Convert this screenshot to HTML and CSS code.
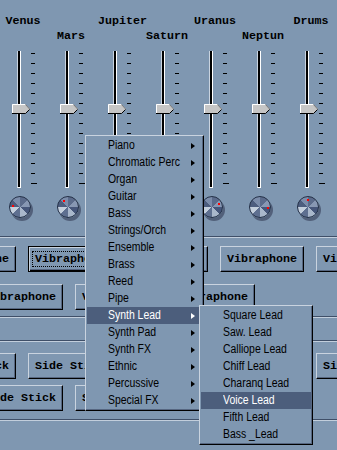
FILE: index.html
```html
<!DOCTYPE html>
<html lang="en">
<head>
    <meta charset="UTF-8">
    <meta name="viewport" content="width=device-width, initial-scale=1.0">
    <title>Mixer</title>
    <link rel="stylesheet" href="styles.css">
</head>
<body>
    <svg class="defs" width="0" height="0">
        <symbol id="thumb" viewBox="0 0 18 10">
            <polygon points="0,0 13,0 18,5 13,10 0,10" fill="#c6c6c6"/>
            <polyline points="0.5,10 0.5,0.5 13.5,0.5" fill="none" stroke="#fff"/>
            <polyline points="13.5,0.5 17.5,5" fill="none" stroke="#7a7a7a"/>
            <polyline points="0,9.5 13.5,9.5 17.5,5.5" fill="none" stroke="#000"/>
        </symbol>
    </svg>

    <div class="mixer">
        <div class="channel">
            <div class="name">Venus</div>
            <div class="fader"><div class="groove"></div><div class="ticks"></div><svg class="thumb" width="18" height="10"><use href="#thumb"/></svg></div>
            <div class="knob"><b style="left: 2px; top: 8px;"></b></div>
        </div>
        <div class="channel low">
            <div class="name">Mars</div>
            <div class="fader"><div class="groove"></div><div class="ticks"></div><svg class="thumb" width="18" height="10"><use href="#thumb"/></svg></div>
            <div class="knob"><b style="left: 5px; top: 3px;"></b></div>
        </div>
        <div class="channel">
            <div class="name">Jupiter</div>
            <div class="fader"><div class="groove"></div><div class="ticks"></div><svg class="thumb" width="18" height="10"><use href="#thumb"/></svg></div>
            <div class="knob"><b style="left: 3px; top: 5px;"></b></div>
        </div>
        <div class="channel low">
            <div class="name">Saturn</div>
            <div class="fader"><div class="groove"></div><div class="ticks"></div><svg class="thumb" width="18" height="10"><use href="#thumb"/></svg></div>
            <div class="knob"><b style="left: 15px; top: 5px;"></b></div>
        </div>
        <div class="channel">
            <div class="name">Uranus</div>
            <div class="fader"><div class="groove"></div><div class="ticks"></div><svg class="thumb" width="18" height="10"><use href="#thumb"/></svg></div>
            <div class="knob"><b style="left: 16px; top: 6px;"></b></div>
        </div>
        <div class="channel low">
            <div class="name">Neptun</div>
            <div class="fader"><div class="groove"></div><div class="ticks"></div><svg class="thumb" width="18" height="10"><use href="#thumb"/></svg></div>
            <div class="knob"><b style="left: 17px; top: 10px;"></b></div>
        </div>
        <div class="channel">
            <div class="name">Drums</div>
            <div class="fader"><div class="groove"></div><div class="ticks"></div><svg class="thumb" width="18" height="10"><use href="#thumb"/></svg></div>
            <div class="knob"><b style="left: 9px; top: 2px;"></b></div>
        </div>
    </div>

    <div class="rule"></div>

    <div class="group group-a">
        <div class="row">
            <div class="btn">Vibraphone</div>
            <div class="btn focus"><span>Vibraphone</span></div>
            <div class="btn">Vibraphone</div>
            <div class="btn">Vibraphone</div>
            <div class="btn">Vibraphone</div>
        </div>
        <div class="row shift">
            <div class="btn">Vibraphone</div>
            <div class="btn">Vibraphone</div>
            <div class="btn">Vibraphone</div>
        </div>
    </div>

    <div class="rule"></div>
    <div class="group group-b"></div>
    <div class="rule"></div>

    <div class="group group-c">
        <div class="row">
            <div class="btn">Side Stick</div>
            <div class="btn">Side Stick</div>
            <div class="btn">Side Stick</div>
            <div class="btn">Side Stick</div>
            <div class="btn">Side Stick</div>
        </div>
        <div class="row shift">
            <div class="btn">Side Stick</div>
            <div class="btn">Side Stick</div>
            <div class="btn">Side Stick</div>
        </div>
    </div>

    <div class="rule"></div>

    <!-- popup menu -->
    <div class="menu">
        <div class="menu-item"><span>Piano</span><i class="arrow"></i></div>
        <div class="menu-item"><span>Chromatic Perc</span><i class="arrow"></i></div>
        <div class="menu-item"><span>Organ</span><i class="arrow"></i></div>
        <div class="menu-item"><span>Guitar</span><i class="arrow"></i></div>
        <div class="menu-item"><span>Bass</span><i class="arrow"></i></div>
        <div class="menu-item"><span>Strings/Orch</span><i class="arrow"></i></div>
        <div class="menu-item"><span>Ensemble</span><i class="arrow"></i></div>
        <div class="menu-item"><span>Brass</span><i class="arrow"></i></div>
        <div class="menu-item"><span>Reed</span><i class="arrow"></i></div>
        <div class="menu-item"><span>Pipe</span><i class="arrow"></i></div>
        <div class="menu-item on"><span>Synth Lead</span><i class="arrow"></i></div>
        <div class="menu-item"><span>Synth Pad</span><i class="arrow"></i></div>
        <div class="menu-item"><span>Synth FX</span><i class="arrow"></i></div>
        <div class="menu-item"><span>Ethnic</span><i class="arrow"></i></div>
        <div class="menu-item"><span>Percussive</span><i class="arrow"></i></div>
        <div class="menu-item"><span>Special FX</span><i class="arrow"></i></div>
    </div>

    <div class="menu submenu">
        <div class="menu-item"><span>Square Lead</span></div>
        <div class="menu-item"><span>Saw. Lead</span></div>
        <div class="menu-item"><span>Calliope Lead</span></div>
        <div class="menu-item"><span>Chiff Lead</span></div>
        <div class="menu-item"><span>Charanq Lead</span></div>
        <div class="menu-item on"><span>Voice Lead</span></div>
        <div class="menu-item"><span>Fifth Lead</span></div>
        <div class="menu-item"><span>Bass _Lead</span></div>
    </div>
</body>
</html>
```

FILE: styles.css
```css
body {
    margin: 0;
    width: 337px;
    height: 450px;
    overflow: hidden;
    position: relative;
    background-color: #7f97b1;
    font-family: "Liberation Mono", "Courier New", monospace;
    font-size: 11.67px;
    font-weight: bold;
    color: #000;
}
.defs {
    position: absolute;
}

/* mixer strip */
.mixer {
    display: flex;
    margin-left: -4px;
    height: 236px;
}
.channel {
    flex: none;
    width: 48px;
}
.name {
    height: 51px;
    box-sizing: border-box;
    padding: 14px 0 0 6px;
    line-height: 14px;
    text-align: center;
    white-space: nowrap;
}
.channel.low .name {
    padding-top: 29px;
}
.fader {
    position: relative;
    display: flex;
    height: 137px;
}
.groove {
    margin-left: 21px;
    width: 2px;
    background-color: #000;
    border-left: 1px solid #c9d3df;
    border-right: 1px solid #fff;
    border-bottom: 1px solid #fff;
}
.ticks {
    align-self: flex-start;
    margin: 2px 0 0 10px;
    width: 6px;
    height: 131px;
    background:
        repeating-linear-gradient(#000 0 1px, transparent 1px 10px) 0 0 / 4px 100% no-repeat,
        linear-gradient(#000, #000) 0 100% / 6px 1px no-repeat;
}
.thumb {
    position: absolute;
    left: 16px;
    top: 53px;
}
.knob {
    position: relative;
    width: 22px;
    height: 22px;
    box-sizing: border-box;
    margin: 8px 0 0 13px;
    border: 1px solid #243047;
    border-radius: 50%;
    background: conic-gradient(#5b6b8b 0 45deg, #8797b3 45deg 90deg, #46567a 90deg 135deg, #a9b7cb 135deg 180deg, #5e6f90 180deg 225deg, #c3cedc 225deg 270deg, #4d5d7e 270deg 315deg, #7b8caa 315deg 360deg);
    box-shadow: 2px 3px 0 #52607a;
}
.knob b {
    position: absolute;
    width: 2px;
    height: 2px;
    background-color: #f00;
}

/* separators */
.rule {
    border-top: 1px solid #3f4f68;
    border-bottom: 1px solid #c2cedc;
}

/* button groups */
.group {
    display: flex;
    flex-direction: column;
    box-sizing: border-box;
}
.group-a {
    height: 78px;
    padding-top: 8px;
    gap: 12px;
}
.group-b {
    height: 22px;
}
.group-c {
    height: 77px;
    padding-top: 11px;
    gap: 6px;
}
.row {
    display: flex;
    gap: 12px;
    margin-left: -68px;
}
.row.shift {
    margin-left: -21px;
}
.btn {
    flex: none;
    display: flex;
    align-items: center;
    justify-content: center;
    width: 84px;
    height: 26px;
    box-sizing: border-box;
    border: 1px solid;
    border-color: #c9d3df #000 #000 #c9d3df;
    box-shadow: inset -1px -1px 0 #566680;
    white-space: nowrap;
}
.btn.focus {
    border-color: #000;
    box-shadow: inset 1px 1px 0 #c9d3df, inset -1px -1px 0 #000, inset -2px -2px 0 #566680;
}
.btn.focus span {
    border: 1px dotted #000;
    padding: 1px 2px;
    line-height: 12px;
}

/* popup menus */
.menu {
    position: absolute;
    left: 85px;
    top: 135px;
    width: 119px;
    box-sizing: border-box;
    padding: 1px;
    border: 1px solid;
    border-color: #c9d3df #000 #000 #c9d3df;
    box-shadow: inset -1px -1px 0 #566680;
    background-color: #7f97b1;
    font-family: "Liberation Sans", Arial, sans-serif;
    font-size: 12px;
    font-weight: normal;
}
.menu-item {
    display: flex;
    align-items: center;
    justify-content: space-between;
    height: 17px;
    line-height: 17px;
    padding: 0 7px 0 21px;
    white-space: nowrap;
}
.menu-item span {
    display: inline-block;
    transform: scaleX(0.87);
    transform-origin: 0 50%;
}
.menu-item.on {
    background-color: #4c5e7c;
    color: #fff;
}
.arrow {
    width: 0;
    height: 0;
    border-left: 4px solid currentColor;
    border-top: 3px solid transparent;
    border-bottom: 3px solid transparent;
}
.submenu {
    left: 199px;
    top: 305px;
    width: 114px;
}
.submenu .menu-item {
    padding-left: 22px;
}
```
